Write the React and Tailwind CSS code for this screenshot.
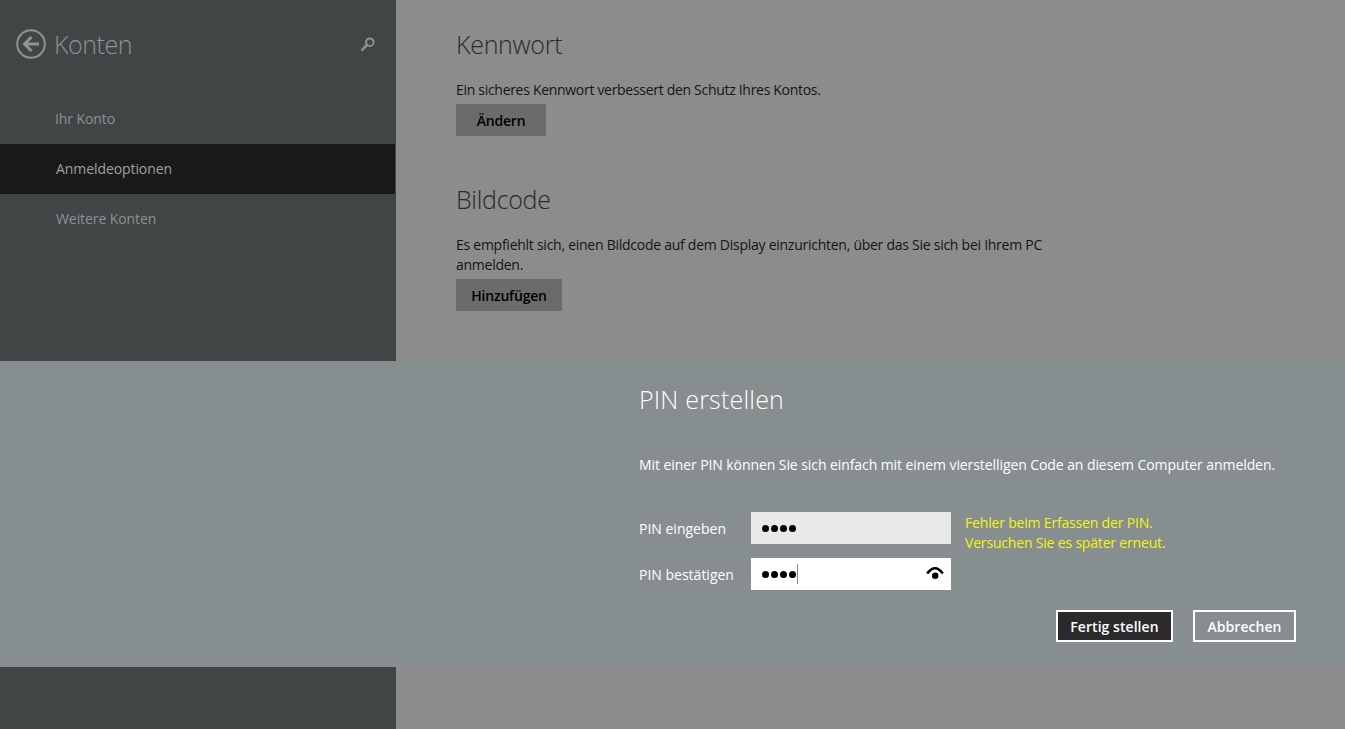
import React from 'react';

function SearchGlyph() {
  return (
    <svg width="16" height="16" viewBox="0 0 16 16" className="text-[#8f9192]">
      <circle cx="9.8" cy="6.2" r="3.8" fill="none" stroke="currentColor" strokeWidth="2" />
      <path d="M7 9 L2.2 13.8" stroke="currentColor" strokeWidth="2.6" strokeLinecap="round" />
    </svg>
  );
}

function BackGlyph() {
  return (
    <svg width="30" height="30" viewBox="0 0 30 30" className="text-[#909293]">
      <circle cx="15" cy="15" r="13.8" fill="none" stroke="currentColor" strokeWidth="2" />
      <path d="M23 15 H9 M15.5 8 L8.5 15 L15.5 22" fill="none" stroke="currentColor" strokeWidth="3" />
    </svg>
  );
}

function EyeGlyph() {
  return (
    <svg width="18" height="14" viewBox="0 0 18 14" className="text-black">
      <path d="M1.2 6.5 Q9 -3.9 16.8 6.5" fill="none" stroke="currentColor" strokeWidth="2.6" />
      <circle cx="9.2" cy="8.7" r="3.2" fill="currentColor" />
    </svg>
  );
}

function Dots() {
  return (
    <span className="flex gap-[2px]">
      <i className="block w-[7px] h-[7px] rounded-full bg-black" />
      <i className="block w-[7px] h-[7px] rounded-full bg-black" />
      <i className="block w-[7px] h-[7px] rounded-full bg-black" />
      <i className="block w-[7px] h-[7px] rounded-full bg-black" />
    </span>
  );
}

export default function App() {
  return (
    <div className="relative h-[729px] w-[1345px] overflow-hidden flex bg-[#8c8c8c] font-['Open_Sans','Liberation_Sans',sans-serif]">
      <aside className="w-[396px] shrink-0 bg-[#424546] pt-[29px]">
        <div className="flex items-center pl-4 pr-[20px] h-[30px]">
          <BackGlyph />
          <h1 className="ml-2 text-[25px] font-light leading-none text-[#909293] tracking-[-0.45px]">Konten</h1>
          <span className="ml-auto"><SearchGlyph /></span>
        </div>
        <nav className="mt-[35px] text-[14px] tracking-[-0.08px]">
          <div className="h-[50px] flex items-center pb-[2px] pl-[55px] text-[#8f9192]">Ihr Konto</div>
          <div className="h-[50px] w-[395px] flex items-center pb-[2px] pl-[56px] bg-[#191919] text-[#a0a0a0]">Anmeldeoptionen</div>
          <div className="h-[50px] flex items-center pb-[2px] pl-[56px] text-[#8f9192]">Weitere Konten</div>
        </nav>
      </aside>

      <main className="flex-1 pl-[60px] pt-[28px] text-[#151515]">
        <h2 className="text-[25px] font-light leading-[32px] text-[#2a2a2a] tracking-[-0.3px]">Kennwort</h2>
        <p className="mt-[20px] text-[14px] leading-[20px] tracking-[-0.3px]">Ein sicheres Kennwort verbessert den Schutz Ihres Kontos.</p>
        <button className="mt-[4px] block h-[32px] w-[90px] bg-[#6b6b6b] text-[14px] font-semibold text-black tracking-[-0.2px]">Ändern</button>

        <h2 className="mt-[47px] text-[25px] font-light leading-[32px] text-[#2a2a2a] tracking-[-0.3px]">Bildcode</h2>
        <p className="mt-[20px] w-[600px] text-[14px] leading-[20px] tracking-[-0.26px]">Es empfiehlt sich, einen Bildcode auf dem Display einzurichten, über das Sie sich bei Ihrem PC anmelden.</p>
        <button className="mt-[4px] block h-[32px] w-[106px] bg-[#6b6b6b] text-[14px] font-semibold text-black tracking-[-0.2px]">Hinzufügen</button>
      </main>

      <section className="absolute left-0 right-0 top-[361px] h-[306px] bg-[#878e8f] pl-[639px] pr-[49px] pt-[21px] text-white">
        <h2 className="text-[25px] font-light leading-[34px] tracking-[0.2px]">PIN erstellen</h2>
        <p className="mt-[39px] text-[14px] leading-[20px] tracking-[-0.08px]">Mit einer PIN können Sie sich einfach mit einem vierstelligen Code an diesem Computer anmelden.</p>

        <div className="mt-[37px] grid grid-cols-[112px_200px_1fr] gap-y-[14px] items-center text-[14px] tracking-[0px]">
          <label>PIN eingeben</label>
          <div className="h-[32px] bg-[#e8e9e9] flex items-center pl-[11px]"><Dots /></div>
          <div className="pl-[14px] text-[#f4f40f] leading-[20px] -mb-[14px] self-start pt-[1px] tracking-[-0.18px]">
            Fehler beim Erfassen der PIN.<br />Versuchen Sie es später erneut.
          </div>
          <label>PIN bestätigen</label>
          <div className="h-[32px] bg-white flex items-center pl-[11px] pr-[7px]">
            <Dots />
            <i className="block w-px h-[20px] bg-[#888] ml-px" />
            <span className="ml-auto"><EyeGlyph /></span>
          </div>
        </div>

        <div className="mt-[20px] flex justify-end gap-[20px] text-[14px] font-semibold tracking-[0.05px]">
          <button className="h-[32px] w-[117px] border-2 border-white bg-[#2b2b2b]">Fertig stellen</button>
          <button className="h-[32px] w-[103px] border-2 border-white">Abbrechen</button>
        </div>
      </section>
    </div>
  );
}
